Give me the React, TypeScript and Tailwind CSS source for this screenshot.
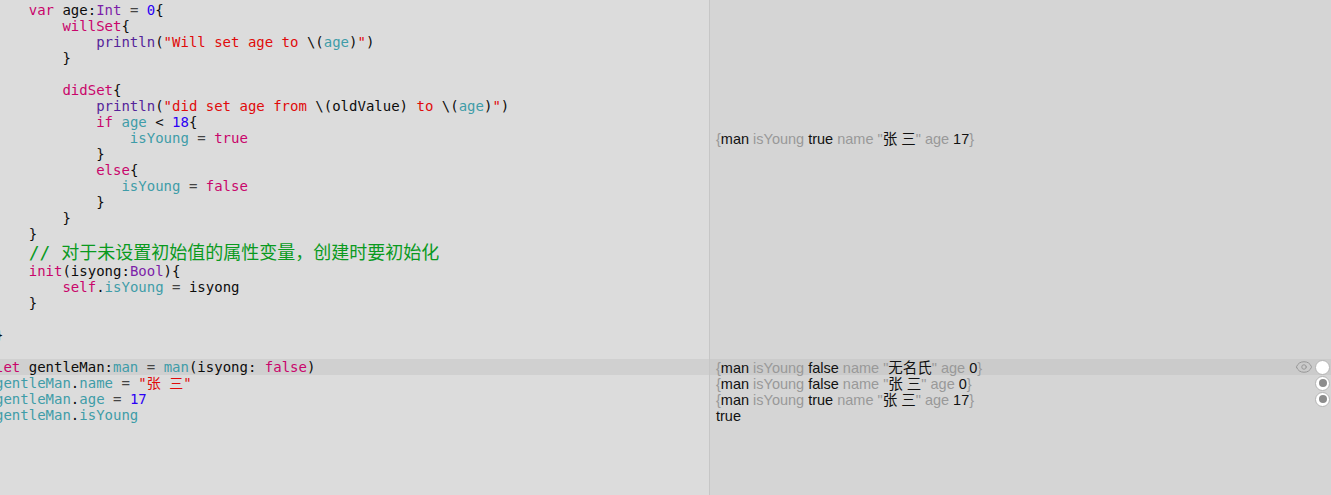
import React from "react";
import { Eye } from "lucide-react";

const mono = "font-['DejaVu_Sans_Mono','Noto_Sans_CJK_SC',monospace]";
const kw = "text-[#c9056b]";
const str = "text-[#e00b0b]";
const num = "text-[#2b00f5]";
const type = "text-[#7d1fa8]";
const fn = "text-[#55249a]";
const teal = "text-[#3f9ca8]";
const op = "text-[#444444]";

function Line({ children, active }: { children?: React.ReactNode; active?: boolean }) {
  return (
    <div className={`h-4 leading-4 whitespace-pre text-[14px] text-[#0c0c0c] ${active ? "bg-[#d0d0d0]" : ""}`}>
      {children}
    </div>
  );
}

function Result({ children, active, mark }: { children: React.ReactNode; active?: boolean; mark?: "open" | "shown" }) {
  return (
    <div className={`h-4 flex items-center justify-between pl-[6px] pr-[1px] ${active ? "bg-[#cbcbcb]" : ""}`}>
      <span className="mt-[2px] text-[14.5px] leading-4 whitespace-pre text-[#111111]">{children}</span>
      {mark && (
        <span className="flex items-center gap-[2px]">
          {mark === "open" && <Eye size={18} strokeWidth={1.3} className="text-[#969696]" />}
          <span className="w-[15px] h-[15px] rounded-full bg-white border border-[#b4b4b4] flex items-center justify-center">
            {mark === "shown" && <span className="w-[8px] h-[8px] rounded-full bg-[#8c8c8c]" />}
          </span>
        </span>
      )}
    </div>
  );
}

const G = ({ children }: { children: React.ReactNode }) => <span className="text-[#999999]">{children}</span>;

export default function App() {
  return (
    <div className="w-[1331px] h-[495px] flex overflow-hidden bg-[#dcdcdc]">
      {/* Source editor */}
      <div className={`w-[709px] shrink-0 pt-[2px] overflow-hidden ${mono}`}>
        <div className="-ml-[5px]">
          <Line>    <span className={kw}>var</span> age:<span className={type}>Int</span> <span className={op}>=</span> <span className={num}>0</span>{"{"}</Line>
          <Line>        <span className={kw}>willSet</span>{"{"}</Line>
          <Line>            <span className={fn}>println</span>(<span className={str}>"Will set age to </span>\(<span className={teal}>age</span>)<span className={str}>"</span>)</Line>
          <Line>        {"}"}</Line>
          <Line> </Line>
          <Line>        <span className={kw}>didSet</span>{"{"}</Line>
          <Line>            <span className={fn}>println</span>(<span className={str}>"did set age from </span>\(oldValue) <span className={str}>to </span>\(<span className={teal}>age</span>)<span className={str}>"</span>)</Line>
          <Line>            <span className={kw}>if</span> <span className={teal}>age</span> &lt; <span className={num}>18</span>{"{"}</Line>
          <Line>                <span className={teal}>isYoung</span> <span className={op}>=</span> <span className={kw}>true</span></Line>
          <Line>            {"}"}</Line>
          <Line>            <span className={kw}>else</span>{"{"}</Line>
          <Line>               <span className={teal}>isYoung</span> <span className={op}>=</span> <span className={kw}>false</span></Line>
          <Line>            {"}"}</Line>
          <Line>        {"}"}</Line>
          <Line>    {"}"}</Line>
          <div className="h-[21px] leading-[21px] text-[18px] whitespace-pre text-[#0a9a1e]">
            <span className="ml-[33.7px]">// 对于未设置初始值的属性变量，创建时要初始化</span>
          </div>
          <Line>    <span className={kw}>init</span>(isyong:<span className={type}>Bool</span>){"{"}</Line>
          <Line>        <span className={kw}>self</span>.<span className={teal}>isYoung</span> <span className={op}>=</span> isyong</Line>
          <Line>    {"}"}</Line>
          <Line> </Line>
          <Line>{"}"}</Line>
          <Line> </Line>
          <Line active><span className={kw}>let</span> gentleMan:<span className={teal}>man</span> <span className={op}>=</span> <span className={teal}>man</span>(isyong: <span className={kw}>false</span>)</Line>
          <Line><span className={teal}>gentleMan</span>.<span className={teal}>name</span> <span className={op}>=</span> <span className={str}>"张 三"</span></Line>
          <Line><span className={teal}>gentleMan</span>.<span className={teal}>age</span> <span className={op}>=</span> <span className={num}>17</span></Line>
          <Line><span className={teal}>gentleMan</span>.<span className={teal}>isYoung</span></Line>
        </div>
      </div>

      {/* Results sidebar */}
      <div className="flex-1 border-l border-[#c6c6c6] bg-[#d5d5d5] pt-[130px] font-['Liberation_Sans','Noto_Sans_CJK_SC',sans-serif]">
        <Result><G>{"{"}</G>man <G>isYoung</G> true <G>name "</G>张 三<G>" age</G> 17<G>{"}"}</G></Result>
        <div className="mt-[213px]">
          <Result active mark="open"><G>{"{"}</G>man <G>isYoung</G> false <G>name "</G>无名氏<G>" age</G> 0<G>{"}"}</G></Result>
          <Result mark="shown"><G>{"{"}</G>man <G>isYoung</G> false <G>name "</G>张 三<G>" age</G> 0<G>{"}"}</G></Result>
          <Result mark="shown"><G>{"{"}</G>man <G>isYoung</G> true <G>name "</G>张 三<G>" age</G> 17<G>{"}"}</G></Result>
          <Result>true</Result>
        </div>
      </div>
    </div>
  );
}
